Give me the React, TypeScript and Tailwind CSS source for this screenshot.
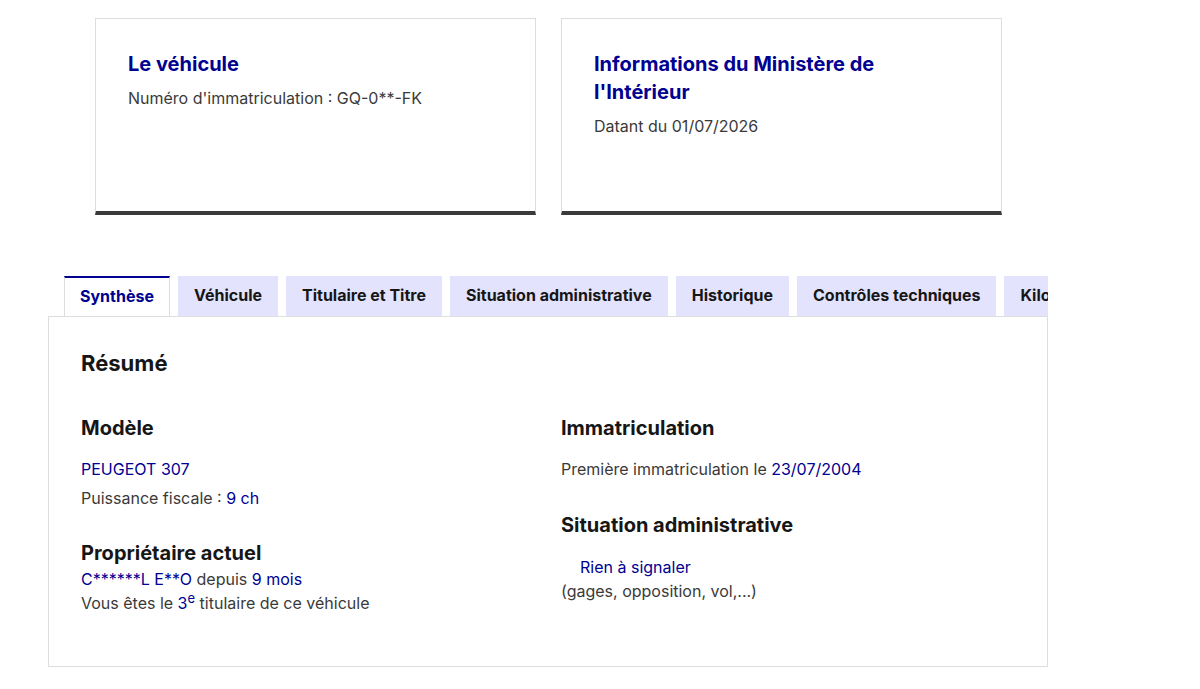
const tabs = ["Synthèse", "Véhicule", "Titulaire et Titre", "Situation administrative", "Historique", "Contrôles techniques", "Kilométrage"];

export default function App() {
  return (
    <div className="min-h-screen bg-white font-['Inter',sans-serif] text-[#3a3a3a]">
      {/* Cartes du haut */}
      <div className="flex gap-[25px] pl-[95px] pt-[18px]">
        <div className="h-[197px] w-[441px] border border-[#dddddd] border-b-4 border-b-[#3a3a3a] px-8 pt-[31px]">
          <h2 className="text-xl font-bold leading-7 text-[#000091]">Le véhicule</h2>
          <p className="mt-2 text-base leading-6">Numéro d'immatriculation : GQ-0**-FK</p>
        </div>
        <div className="h-[197px] w-[441px] border border-[#dddddd] border-b-4 border-b-[#3a3a3a] px-8 pt-[31px]">
          <h2 className="pr-16 text-xl font-bold leading-7 text-[#000091]">Informations du Ministère de l'Intérieur</h2>
          <p className="mt-2 text-base leading-6">Datant du 01/07/2026</p>
        </div>
      </div>

      {/* Onglets */}
      <div className="ml-[48px] mt-[61px] w-[1000px]">
        <div className="flex gap-2 overflow-hidden pl-4">
          {tabs.map((t, i) => (
            <div
              key={t}
              className={
                i === 0
                  ? "relative z-10 -mb-px h-[41px] shrink-0 border-x border-t-2 border-[#dddddd] border-t-[#000091] bg-white px-[15px] text-base font-bold leading-[36px] text-[#000091]"
                  : "h-10 shrink-0 bg-[#e3e3fd] px-4 text-base font-bold leading-[38px] text-[#161616]"
              }
            >
              {t}
            </div>
          ))}
        </div>
        <div className="h-[351px] border border-[#dddddd] px-8 pt-[30px]">
          <h3 className="text-[22px] font-bold leading-8 text-[#161616]">Résumé</h3>
          <div className="mt-[35px] grid grid-cols-2 gap-x-[26px]">
            <div>
              <h4 className="text-xl font-bold leading-7 text-[#161616]">Modèle</h4>
              <p className="mt-[15px] leading-6 text-[#000091]">PEUGEOT 307</p>
              <p className="mt-[5px] leading-6">
                Puissance fiscale : <span className="text-[#000091]">9 ch</span>
              </p>
              <h4 className="mt-[29px] text-xl font-bold leading-7 text-[#161616]">Propriétaire actuel</h4>
              <p className="leading-6">
                <span className="text-[#000091]">C******L E**O</span> depuis{" "}
                <span className="text-[#000091]">9 mois</span>
              </p>
              <p className="leading-6">
                Vous êtes le{" "}
                <span className="text-[#000091]">
                  3<sup className="text-[13px]">e</sup>
                </span>{" "}
                titulaire de ce véhicule
              </p>
            </div>
            <div>
              <h4 className="text-xl font-bold leading-7 text-[#161616]">Immatriculation</h4>
              <p className="mt-[15px] leading-6">
                Première immatriculation le <span className="text-[#000091]">23/07/2004</span>
              </p>
              <h4 className="mt-[30px] text-xl font-bold leading-7 text-[#161616]">Situation administrative</h4>
              <p className="mt-4 pl-[19px] leading-6 text-[#000091]">Rien à signaler</p>
              <p className="leading-6">(gages, opposition, vol,...)</p>
            </div>
          </div>
        </div>
      </div>
    </div>
  );
}
